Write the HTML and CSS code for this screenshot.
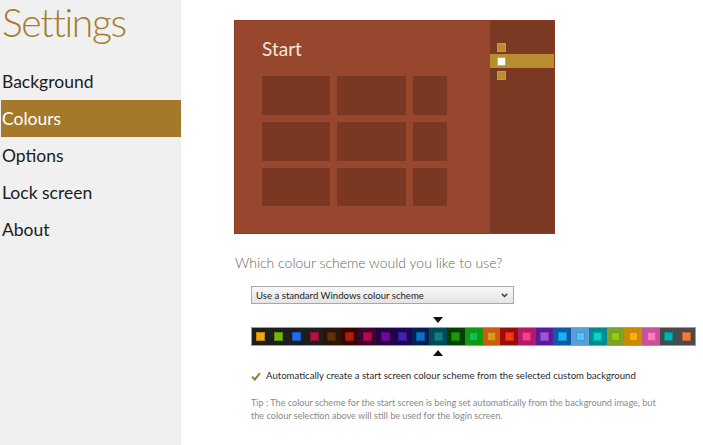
FILE: index.html
```html
<!DOCTYPE html>
<html>
<head>
<meta charset="utf-8">
<link rel="stylesheet" href="styles.css">
</head>
<body>
<div class="app">
  <aside class="sidebar">
    <h1 class="title">Settings</h1>
    <nav class="nav">
      <div class="nav-item">Background</div>
      <div class="nav-item active">Colours</div>
      <div class="nav-item">Options</div>
      <div class="nav-item">Lock screen</div>
      <div class="nav-item">About</div>
    </nav>
  </aside>
  <main class="content">
    <div class="preview">
      <div class="preview-main">
        <div class="preview-title">Start</div>
        <div class="tiles">
          <div class="tile"></div><div class="tile"></div><div class="tile"></div>
          <div class="tile"></div><div class="tile"></div><div class="tile"></div>
          <div class="tile"></div><div class="tile"></div><div class="tile"></div>
        </div>
      </div>
      <div class="preview-charms">
        <div class="charm"></div>
        <div class="charm-band"><div class="charm charm-white"></div></div>
        <div class="charm charm-last"></div>
      </div>
    </div>

    <p class="question">Which colour scheme would you like to use?</p>

    <div class="select">
      <span class="select-text">Use a standard Windows colour scheme</span>
      <svg class="chevron" width="7" height="5" viewBox="0 0 7 5"><path d="M0.8 0.8 L3.5 3.6 L6.2 0.8" fill="none" stroke="#333" stroke-width="1.4"/></svg>
    </div>

    <div class="swatches">
      <div class="cell c-dark"><span class="sw" style="background:#f2a80d"></span></div>
      <div class="cell c-dark"><span class="sw" style="background:#78b20a"></span></div>
      <div class="cell c-dark"><span class="sw" style="background:#1a6ef0"></span></div>
      <div class="cell c-dark"><span class="sw" style="background:#b0143e"></span></div>
      <div class="cell" style="background:#2a1502"><span class="sw" style="background:#603006"></span></div>
      <div class="cell" style="background:#3c0202"><span class="sw" style="background:#a82008"></span></div>
      <div class="cell" style="background:#3e042c"><span class="sw" style="background:#b8084c"></span></div>
      <div class="cell" style="background:#250440"><span class="sw" style="background:#7008a8"></span></div>
      <div class="cell" style="background:#1a0652"><span class="sw" style="background:#4a1cb4"></span></div>
      <div class="cell" style="background:#03204e"><span class="sw" style="background:#0a70cc"></span></div>
      <div class="cell selected" style="background:#004b5a"><span class="sw" style="background:#0a8282"></span></div>
      <div class="cell" style="background:#073e07"><span class="sw" style="background:#199a08"></span></div>
      <div class="cell" style="background:#13990f"><span class="sw" style="background:#10c050"></span></div>
      <div class="cell" style="background:#d2580e"><span class="sw" style="background:#d89c18"></span></div>
      <div class="cell" style="background:#9a0c0c"><span class="sw" style="background:#ff3312"></span></div>
      <div class="cell" style="background:#b01c6a"><span class="sw" style="background:#ff3a8a"></span></div>
      <div class="cell" style="background:#5a1aa0"><span class="sw" style="background:#a052e0"></span></div>
      <div class="cell" style="background:#0e5aa8"><span class="sw" style="background:#1ab2ff"></span></div>
      <div class="cell" style="background:#5c9cd8"><span class="sw" style="background:#4dc6ff"></span></div>
      <div class="cell" style="background:#008c8c"><span class="sw" style="background:#00d4d4"></span></div>
      <div class="cell" style="background:#7ea12e"><span class="sw" style="background:#90cf08"></span></div>
      <div class="cell" style="background:#c88c04"><span class="sw" style="background:#ffb008"></span></div>
      <div class="cell" style="background:#c8509c"><span class="sw" style="background:#ff7ac0"></span></div>
      <div class="cell cell-wide"><span class="sw" style="background:#00b4b4"></span><span class="sw" style="background:#f07c3a"></span></div>
    </div>

    <div class="check">
      <svg class="checkmark" width="10" height="9" viewBox="0 0 10 9"><path d="M1 4.6 L3.8 7.4 L9 1.2" fill="none" stroke="#9c7a2e" stroke-width="2"/></svg>
      <span>Automatically create a start screen colour scheme from the selected custom background</span>
    </div>

    <p class="tip">Tip : The colour scheme for the start screen is being set automatically from the background image, but<br>the colour selection above will still be used for the login screen.</p>
  </main>
</div>
</body>
</html>
```

FILE: styles.css
```css
* { box-sizing: border-box; }

html, body {
  margin: 0;
  padding: 0;
  background: #ffffff;
}

body {
  font-family: "Lato", "Open Sans", sans-serif;
  color: #1a1a1a;
}

.app {
  display: flex;
  width: 703px;
  height: 445px;
  overflow: hidden;
}

/* Sidebar */
.sidebar {
  width: 181px;
  flex: none;
  background: #f0f0f0;
  height: 445px;
}

.title {
  margin: 0 0 0 2px;
  font-size: 39px;
  line-height: 44px;
  font-weight: 300;
  letter-spacing: -1.3px;
  color: #a57c2e;
}

.nav {
  margin-top: 19px;
  display: flex;
  flex-direction: column;
}

.nav-item {
  height: 37px;
  line-height: 37px;
  font-size: 17.5px;
  padding-left: 2px;
  color: #1c1c1c;
}

.nav-item.active {
  margin-left: 1px;
  padding-left: 1px;
  background: #a47a2a;
  color: #ffffff;
}

/* Content */
.content {
  flex: 1;
  padding: 20px 0 0 53px;
  display: flex;
  flex-direction: column;
  align-items: flex-start;
}

.preview {
  width: 321px;
  height: 214px;
  border: 1px solid #8c3b20;
  display: flex;
  background: #97472d;
}

.preview-main {
  flex: 1;
  padding: 18px 0 0 27px;
}

.preview-title {
  font-size: 19px;
  line-height: 19px;
  color: #f4e4dc;
}

.tiles {
  margin-top: 18px;
  display: grid;
  grid-template-columns: 68px 69px 34px;
  grid-template-rows: 39px 39px 38px;
  gap: 7px;
}

.tile {
  background: #7a3823;
}

.preview-charms {
  width: 64px;
  flex: none;
  background: #7b3924;
  padding-top: 22px;
  display: flex;
  flex-direction: column;
}

.charm {
  width: 9px;
  height: 9px;
  margin-left: 7px;
  background: #b98c2e;
  border: 1px solid #c89b3a;
}

.charm-band {
  margin-top: 2px;
  height: 14px;
  background: #b88d30;
  padding-top: 3px;
}

.charm-white {
  width: 9px;
  height: 9px;
  background: #ffffff;
  border: 1px solid #d6a848;
}

.charm-last {
  margin-top: 3px;
}

.question {
  margin: 21px 0 0 1px;
  font-size: 14px;
  line-height: 16px;
  font-weight: 300;
  color: #666666;
}

.select {
  margin: 15px 0 0 17px;
  width: 263px;
  height: 18px;
  border: 1px solid #a8a8a8;
  background: linear-gradient(#f8f8f8, #e4e4e4);
  display: flex;
  align-items: center;
  justify-content: space-between;
  padding: 0 5px 0 4px;
}

.select-text {
  font-size: 9.6px;
  color: #1e1e1e;
}

.chevron {
  display: block;
}

.swatches {
  margin: 23px 0 0 17px;
  width: 445px;
  height: 19px;
  border: 1px solid #9c9c9c;
  display: flex;
}

.cell {
  flex: 1 1 0;
  display: flex;
  align-items: center;
  justify-content: center;
  position: relative;
}

.c-dark {
  background: #1e1e1e;
}

.cell-wide {
  flex: none;
  width: 35px;
  background: #4a4a4a;
  gap: 9px;
}

.sw {
  display: block;
  width: 9px;
  height: 9px;
  box-shadow: inset 0 0 0 1px rgba(0, 0, 0, 0.22);
}

.selected::before,
.selected::after {
  content: "";
  position: absolute;
  left: 50%;
  margin-left: -5px;
  border-left: 5px solid transparent;
  border-right: 5px solid transparent;
}

.selected::before {
  top: -11px;
  border-top: 6px solid #111111;
}

.selected::after {
  bottom: -11px;
  border-bottom: 6px solid #111111;
}

.check {
  margin: 24px 0 0 17px;
  display: flex;
  align-items: center;
  gap: 5px;
  font-size: 9.6px;
  line-height: 12px;
  color: #2a2a2a;
}

.checkmark {
  display: block;
}

.tip {
  margin: 14px 0 0 17px;
  font-size: 9.1px;
  line-height: 13px;
  color: #8a8a8a;
  white-space: nowrap;
}
```
